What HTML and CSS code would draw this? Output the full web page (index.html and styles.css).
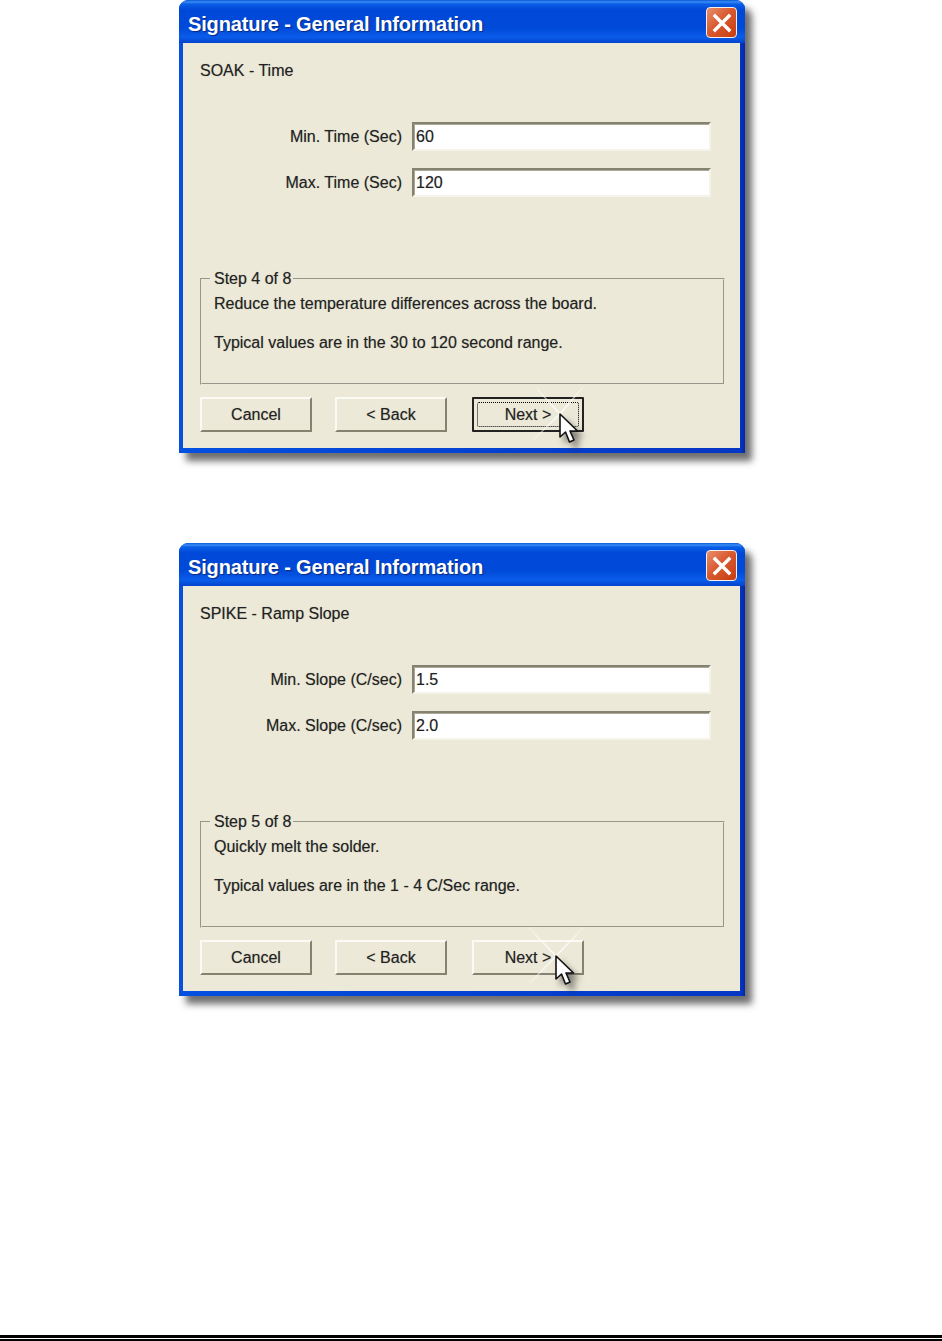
FILE: index.html
```html
<!DOCTYPE html>
<html lang="en">
<head>
<meta charset="UTF-8" />
<title>Signature - General Information</title>
<link rel="stylesheet" href="styles.css">
</head>
<body>

<div class="dialogs">
  <div class="dialog">
    <div class="titlebar">
      <span class="title">Signature - General Information</span>
      <div class="close-btn">
        <svg width="20" height="20" viewBox="0 0 20 20"><path d="M3 3 L17 17 M17 3 L3 17" stroke="#fff" stroke-width="3.4" stroke-linecap="square"/></svg>
      </div>
    </div>
    <div class="content">
      <div class="heading">SOAK - Time</div>
      <div class="fields">
        <label class="field-label">Min. Time (Sec)</label>
        <input class="field-input" type="text" value="60" />
        <label class="field-label">Max. Time (Sec)</label>
        <input class="field-input" type="text" value="120" />
      </div>
      <fieldset class="step-box">
        <legend>Step 4 of 8</legend>
        <p>Reduce the temperature differences across the board.</p>
        <p>Typical values are in the 30 to 120 second range.</p>
      </fieldset>
      <div class="buttons">
        <button class="btn">Cancel</button>
        <button class="btn">&lt; Back</button>
        <button class="btn btn-next btn-focus"><span class="focus-ring">Next &gt;</span></button>
      </div>
    </div>
    <!-- sparkle + mouse pointer, tip is at 30,30 in the svg -->
    <svg class="pointer pointer-first" width="60" height="60" viewBox="0 0 60 60">
      <defs>
        <radialGradient id="sparkFade" gradientUnits="userSpaceOnUse" cx="30" cy="30" r="36">
          <stop offset="0" stop-color="#fff" stop-opacity="0.95"/>
          <stop offset="1" stop-color="#fff" stop-opacity="0.3"/>
        </radialGradient>
      </defs>
      <path class="spark" d="M7 5 L30 30 M53 3 L30 30 M3 56 L30 30"/>
      <path class="arrow" d="M30 30 L30 53 L35.5 48 L39.5 58 L44 56 L40 47 L47.5 47 Z"/>
    </svg>
  </div>

  <div class="dialog">
    <div class="titlebar">
      <span class="title">Signature - General Information</span>
      <div class="close-btn">
        <svg width="20" height="20" viewBox="0 0 20 20"><path d="M3 3 L17 17 M17 3 L3 17" stroke="#fff" stroke-width="3.4" stroke-linecap="square"/></svg>
      </div>
    </div>
    <div class="content">
      <div class="heading">SPIKE - Ramp Slope</div>
      <div class="fields">
        <label class="field-label">Min. Slope (C/sec)</label>
        <input class="field-input" type="text" value="1.5" />
        <label class="field-label">Max. Slope (C/sec)</label>
        <input class="field-input" type="text" value="2.0" />
      </div>
      <fieldset class="step-box">
        <legend>Step 5 of 8</legend>
        <p>Quickly melt the solder.</p>
        <p>Typical values are in the 1 - 4 C/Sec range.</p>
      </fieldset>
      <div class="buttons">
        <button class="btn">Cancel</button>
        <button class="btn">&lt; Back</button>
        <button class="btn btn-next">Next &gt;</button>
      </div>
    </div>
    <svg class="pointer pointer-second" width="60" height="60" viewBox="0 0 60 60">
      <path class="spark" d="M3 2 L30 30 M57 2 L30 30 M4 57 L30 30"/>
      <path class="arrow" d="M30 30 L30 53 L35.5 48 L39.5 58 L44 56 L40 47 L47.5 47 Z"/>
    </svg>
  </div>
</div>

<div class="page-rule"></div>

</body>
</html>
```

FILE: styles.css
```css
html, body {
  margin: 0;
  padding: 0;
  background: #fff;
}

body {
  height: 1341px;
  display: flex;
  flex-direction: column;
  font-family: "Liberation Sans", Arial, sans-serif;
  font-size: 16px;
  color: #222;
  text-shadow: 0 0 1px rgba(0, 0, 0, 0.3);
}

.dialogs {
  display: flex;
  flex-direction: column;
  gap: 90px;
  padding-left: 179px;
}

.dialog {
  position: relative;
  width: 566px;
  height: 453px;
  box-sizing: border-box;
  display: flex;
  flex-direction: column;
  background: linear-gradient(to right, #0a4fdc 0, #0450e0 4px, #0636c4 561px, #0228a8 566px);
  border-radius: 9px 9px 0 0;
  box-shadow: 7px 8px 7px rgba(50, 50, 50, 0.7);
}

.titlebar {
  height: 43px;
  flex: none;
  display: flex;
  align-items: center;
  justify-content: space-between;
  padding: 0 8px 0 9px;
  border-radius: 9px 9px 0 0;
  background: linear-gradient(to bottom, #0a5ad8 0, #3a8cf4 2px, #0a5ee6 4px, #0048d8 10px, #004ad9 28px, #0a5cea 37px, #0344cc 43px);
}

.title {
  margin-top: 6px;
  color: #fff;
  font-weight: bold;
  font-size: 20px;
  letter-spacing: -0.16px;
  text-shadow: 1px 1px 1px #0a2a80;
}

.close-btn {
  width: 29px;
  height: 29px;
  margin-top: 2px;
  display: flex;
  align-items: center;
  justify-content: center;
  border: 1px solid #f4f0ea;
  border-radius: 4px;
  background: linear-gradient(135deg, #e8906c 0, #d95a30 45%, #c83c10 100%);
}

.content {
  flex: 1;
  margin: 0 5px 5px 4px;
  padding: 18px 15px 0 17px;
  background: #ece9d8;
}

.heading {
  line-height: 20px;
}

.fields {
  display: grid;
  grid-template-columns: 202px 299px;
  column-gap: 10px;
  row-gap: 17px;
  align-items: center;
  margin-top: 41px;
}

.field-label {
  text-align: right;
}

.field-input {
  height: 29px;
  box-sizing: border-box;
  padding: 0 0 0 2px;
  margin: 0;
  font-family: inherit;
  font-size: 16px;
  color: #222;
  text-shadow: inherit;
  background: #fff;
  outline: none;
  border-style: solid;
  border-width: 2px;
  border-color: #85826f #f5f3ea #f5f3ea #85826f;
  box-shadow: inset 1px 1px 0 #aca899;
}

.step-box {
  height: 115px;
  box-sizing: border-box;
  margin: 73px 0 0 0;
  padding: 6px 0 0 12px;
  border: 2px groove #ece9d8;
}

.step-box legend {
  margin-left: -4px;
  padding: 0 2px 0 4px;
  line-height: 18px;
}

.step-box p {
  margin: 0 0 19px 0;
  line-height: 20px;
}

.buttons {
  display: flex;
  gap: 23px;
  margin-top: 12px;
}

.btn {
  width: 112px;
  height: 35px;
  box-sizing: border-box;
  padding: 0;
  font-family: inherit;
  font-size: 16px;
  color: #222;
  text-shadow: inherit;
  background: #ece9d8;
  border-style: solid;
  border-width: 2px;
  border-color: #fbfaf4 #85826f #85826f #fbfaf4;
  border-radius: 1px;
}

.btn-next {
  margin-left: 2px;
}

.btn-focus {
  border-color: #222;
  padding: 3px;
}

.focus-ring {
  display: flex;
  align-items: center;
  justify-content: center;
  height: 100%;
  box-sizing: border-box;
  border: 1px dotted #000;
  border-radius: 2px;
}

.pointer {
  position: absolute;
  overflow: visible;
}

.pointer-first {
  left: 351px;
  top: 384px;
}

.pointer-second {
  left: 347px;
  top: 383px;
}

.spark {
  fill: none;
  stroke: url(#sparkFade);
  stroke-width: 1.5;
}

.arrow {
  fill: #fff;
  stroke: #111;
  stroke-width: 1.6;
  stroke-linejoin: round;
  filter: drop-shadow(5px 6px 3px rgba(40, 40, 40, 0.55));
}

.page-rule {
  margin-top: auto;
  height: 1px;
  border-top: 3px solid #000;
  border-bottom: 2px solid #000;
}
```
